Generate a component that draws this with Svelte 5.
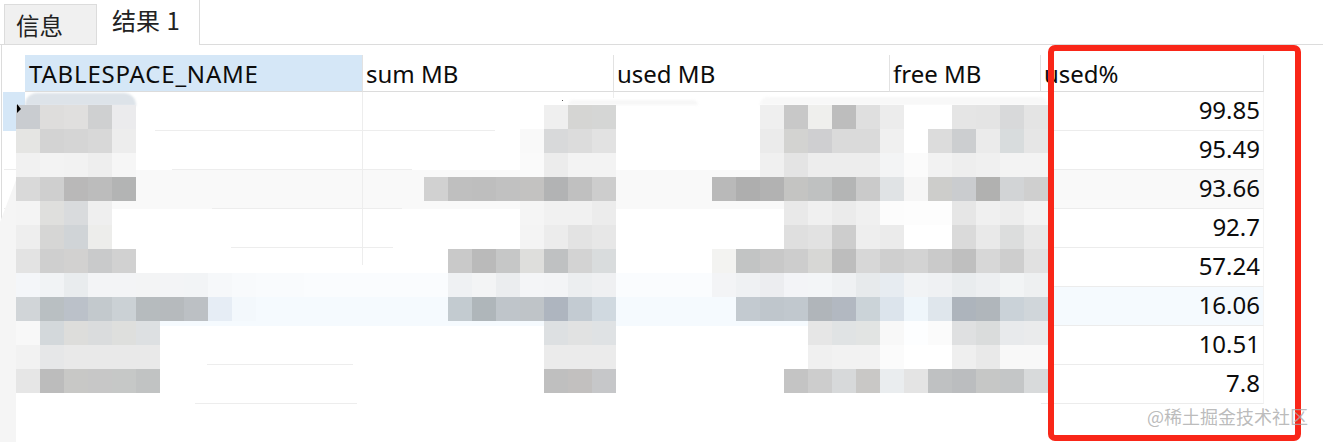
<script>
    const columns = [
        { name: "TABLESPACE_NAME", selected: true },
        { name: "sum MB" },
        { name: "used MB" },
        { name: "free MB" },
        { name: "used%" }
    ];

    const rows = [
        { value: "99.85", tone: "current" },
        { value: "95.49" },
        { value: "93.66", tone: "grey" },
        { value: "92.7" },
        { value: "57.24" },
        { value: "16.06", tone: "blue" },
        { value: "10.51" },
        { value: "7.8" }
    ];

    // mosaic that hides the sensitive values: [first column, colours]
    const mosaicRows = [
        [[0, "c9ccd0 dedddc e0dfde cfd0d1 ebebed"], [22, "efefef d5d5d3 d5d6d5"], [31, "efefef c8c8c8 efefed bdbdbd dfdfdf ececec ffffff ffffff e5e5e5 e4e4e4 d8d9da e4e4e4"]],
        [[0, "e5e5e3 d3d3d3 d5d5d5 d8d8d8 ededed"], [21, "f9f9f9 d8d9da dcdcdc e2e2e2"], [31, "ebebeb d3d3d1 cfcfd1 dadada dadada f0f0f0 ffffff dcdcdc ccced0 ebebeb d8dcdd e6e6e6"]],
        [[0, "f1f1f1 f3f3f3 f2f2f2 eeeeee f6f6f6"], [21, "fafafa ececec f3f3f3 f3f3f3"], [31, "f0f0f0 e4e4e4 ededed ededed ededed f3f4f5 fbfbfb f2f2f2 eeeeee f0f0f0 f3f3f3 f3f3f3"]],
        [[0, "d9d9d9 cfcfcf b9b8b8 bcbcbc b3b4b4"], [17, "d1d1d1 bfbfbf bebebe c1c1c1 c3c2c1 b2b3b4 c0c0c0 cdcdcd"], [29, "b9b9b9 aeaeae b2b2b2 c4c4c2 bfc1c1 b4b5b5 cacaca e0e3e5 f6f6f6 cdcdcb cacccf b1b1b0 d2d4d6 cfcfcf"]],
        [[0, "f4f4f4 dfdfdd d9dbdd efefef"], [21, "f5f5f5 f1f1f1 f1f1f1 ececec"], [32, "e9e9e9 f0f0f0 ebebeb f0f0f0 fcfcfc fdfdfd fdfdfd e6e6e6 f0f0f0 ededed f3f3f3"]],
        [[0, "eeeeee d6d6d5 d0d4d7 ededeb"], [21, "f4f4f4 ececec e3e3e3 e7e7e7"], [32, "dfdfdf e2e2e2 cdcdcd eeeeee ebebeb ffffff ffffff dadada e9e9e9 dcdddd e8e8e8"]],
        [[0, "e3e3e3 cfcfcf d2d1d0 c9cacb d1d1d1"], [18, "c9c9c9 bababa c6c7c7 dededc bfc1c2 d3d3d3 d9dcdd"], [29, "f3f3f1 c2c4c4 c8c8c8 cdcdcd d7d7d5 bdbdbd d7d7d7 cfcfcf d3d3d3 cacaca bfbfbf d7d7d7 cecece e1e1e1"]],
        [[0, "f4f6f9 f1f3f5 e9ecee f3f4f6 f3f4f6 f3f4f5 f3f4f6 f2f4f6 f6f8fa f8fafc f9fbfd f9fbfd fafcfe fafcfe fafcfe fafcfe fafcfe fafcfe eff1f3 f3f4f5 ebedef f4f5f7 f3f4f6 eceef0 eff0f2 fafcfe fafcfe fafcfe fafcfe f3f4f6 eff1f3 ecedf0 f3f4f7 f3f5f7 eff1f3 e7eaec e7ecf1 f1f3f5 eff1f3 e9ecee edeff1 f2f4f5 eef0f1"]],
        [[0, "d1d5d8 b9bfc2 bbc1c9 c3c9cd cbd1d5 b6bbbe b6babd bcc0c4 e6edf5 f3f8fc"], [18, "c3cbd0 afb6ba bfc5ca bfc4c8 aeb5bf c3cbd2 d0d9e0"], [30, "c3cad0 bfc6cc c1c8ce b0b5ba b2b8c1 cbd3d8 dce4ec eff6fb dfe6ec adb4bc b0b6bb cad2d8 d0d6da"]],
        [[0, "f8f8f8 d3d8db dddddb dadcdd dedfdd dde0e2"], [22, "dde0e2 e1e2e2 dfe2e4"], [33, "e6e6e6 e0e3e4 e2e4e3 f8f8f8 fdfeff fbfbfb dfe0e1 dadcdc e8eaec eaebec"]],
        [[0, "f2f2f2 e6e7e8 e9e9e9 e9e9e9 e9e9e9 e9e9e9"], [22, "ebebeb ebebeb ebebeb"], [33, "f0f0f0 f2f2f2 f2f2f2 fbfbfb ffffff ffffff efefef e9e9e9 f8f8f8 f8f8f8"]],
        [[0, "e6e6e6 bcbcbc c8c8c6 c7c7c7 c6c8c7 c1c3c3"], [22, "bfbfbf c2c0bf c6c7c9"], [32, "c4c4c4 cdcdcd d7d9da c9c8c6 eaedef e4e4e4 bfc1c2 bbbdbf c6c7c6 c4c6c7 d8dadb"]]
    ];

    const MOSAIC_COLS = 43;

    const mosaic = mosaicRows.flatMap(segments => {
        const cells = new Array(MOSAIC_COLS).fill(null);
        segments.forEach(([start, colours]) => {
            colours.split(" ").forEach((c, i) => {
                cells[start + i] = "#" + c;
            });
        });
        return cells;
    });

    // bits of grid line that survived the retouching
    const lines = [
        { x: 155, y: 130, w: 340, h: 1 },
        { x: 4, y: 169, w: 12, h: 1 },
        { x: 172, y: 169, w: 240, h: 1 },
        { x: 4, y: 208, w: 2, h: 1 },
        { x: 212, y: 208, w: 190, h: 1 },
        { x: 231, y: 247, w: 162, h: 1 },
        { x: 207, y: 364, w: 146, h: 1 },
        { x: 195, y: 403, w: 162, h: 1 },
        { x: 362, y: 92, w: 1, h: 173 },
        { x: 613, y: 92, w: 1, h: 6 }
    ];
</script>

<div class="page">
    <div class="tabs">
        <div class="tab">信息</div>
        <div class="tab active">结果 1</div>
    </div>

    <div class="panel">
        <div class="table">
            <div class="corner"></div>
            {#each columns as col}
                <div class="head" class:selected={col.selected}>{col.name}</div>
            {/each}

            {#each rows as row}
                <div class="marker {row.tone ?? ''}"></div>
                <div class="cell {row.tone ?? ''}"></div>
                <div class="cell {row.tone ?? ''}"></div>
                <div class="cell {row.tone ?? ''}"></div>
                <div class="cell {row.tone ?? ''}"></div>
                <div class="cell num {row.tone ?? ''}">{row.value}</div>
            {/each}
        </div>
    </div>

    {#each lines as l}
        <div class="line" style="left:{l.x}px;top:{l.y}px;width:{l.w}px;height:{l.h}px"></div>
    {/each}

    <div class="strip"></div>
    <div class="smear one"></div>
    <div class="smear two"></div>
    <div class="smear three"></div>

    <div class="mosaic">
        {#each mosaic as c}
            <div style={c ? `background:${c}` : ""}></div>
        {/each}
    </div>

    <svg class="arrow" width="5" height="10" viewBox="0 0 5 10">
        <polygon points="0,0 4,5 0,9" fill="#000" />
    </svg>
    <div class="dot"></div>

    <div class="redbox"></div>
    <div class="mark">@稀土掘金技术社区</div>
</div>

<style>
    :global(body) {
        margin: 0;
        background: #fff;
    }

    .page {
        position: relative;
        width: 1323px;
        height: 442px;
        overflow: hidden;
        background: #fff;
        color: #0c0c0c;
        font-family: "Noto Sans", "Open Sans", "Noto Sans CJK SC", sans-serif;
    }

    .tabs {
        display: flex;
        align-items: flex-end;
        height: 44px;
        padding-left: 4px;
        border-bottom: 1px solid #dcdcdc;
    }

    .tab {
        box-sizing: border-box;
        width: 93px;
        height: 40px;
        padding-left: 11px;
        line-height: 40px;
        font-size: 23.5px;
        font-family: "Noto Sans CJK SC", sans-serif;
        color: #222;
        background: #f0f0f0;
        border: 1px solid #dcdcdc;
        border-bottom: none;
    }

    .tab.active {
        width: 103px;
        height: 45px;
        margin-bottom: -1px;
        padding-left: 15px;
        line-height: 40px;
        font-size: 24px;
        word-spacing: 1px;
        background: #fff;
        border-left: none;
        border-top: none;
    }

    .panel {
        padding-top: 10px;
        border-left: 1px solid #dcdcdc;
        margin-left: 1px;
        height: 173px;
    }

    .table {
        display: grid;
        grid-template-columns: 22px 338px 251px 276px 151px 223px;
        grid-auto-rows: 39px;
        grid-template-rows: 37px;
        margin-left: 1px;
    }

    .corner {
        background: #fff;
    }

    .head {
        box-sizing: border-box;
        padding-left: 3px;
        line-height: 38px;
        font-size: 24px;
        white-space: nowrap;
        border-right: 1px solid #e2e2e2;
        border-bottom: 1px solid #dcdcdc;
    }

    .head:last-child,
    .head.selected {
        padding-left: 4px;
    }

    .head.selected {
        letter-spacing: 0.8px;
        background: #d5e7f7;
    }

    .cell {
        box-sizing: border-box;
    }

    .cell.num {
        padding-right: 3px;
        text-align: right;
        line-height: 35px;
        font-size: 24px;
        border-right: 1px solid #f3f3f3;
        border-bottom: 1px solid #ececec;
    }

    .marker.current {
        background: #d5e7f7;
    }

    .cell.grey {
        background: #f9f9f9;
    }

    .cell.blue {
        background: #f5fafe;
    }

    .line {
        position: absolute;
        background: #ededed;
    }

    .strip {
        position: absolute;
        left: 0;
        top: 180px;
        width: 16px;
        height: 262px;
        background: #f5f5f5;
        clip-path: polygon(100% 0, 100% 100%, 0 100%, 0 42px);
    }

    .smear {
        position: absolute;
        height: 13px;
        top: 93px;
        border-radius: 12px 12px 0 0;
        filter: blur(1px);
    }

    .smear.one {
        left: 25px;
        width: 111px;
        background: #dde3e9;
    }

    .smear.two {
        left: 568px;
        top: 100px;
        height: 5px;
        width: 130px;
        background: #f7f7f7;
    }

    .smear.three {
        left: 760px;
        top: 97px;
        height: 8px;
        width: 288px;
        background: #f8f8f8;
    }

    .mosaic {
        position: absolute;
        left: 16px;
        top: 105px;
        display: grid;
        grid-template-columns: repeat(43, 24px);
        grid-auto-rows: 24px;
        filter: blur(0.5px);
    }

    .arrow {
        position: absolute;
        left: 17px;
        top: 104px;
    }

    .dot {
        position: absolute;
        left: 562px;
        top: 100px;
        width: 1px;
        height: 1px;
        background: #555;
    }

    .redbox {
        position: absolute;
        left: 1048px;
        top: 45px;
        width: 253px;
        height: 396px;
        box-sizing: border-box;
        border: 6px solid #f92618;
        border-radius: 7px;
    }

    .mark {
        position: absolute;
        left: 1147px;
        top: 402px;
        font-family: "Noto Sans CJK SC", sans-serif;
        font-size: 18px;
        line-height: 28px;
        color: rgba(170, 170, 170, 0.8);
        white-space: nowrap;
    }
</style>
